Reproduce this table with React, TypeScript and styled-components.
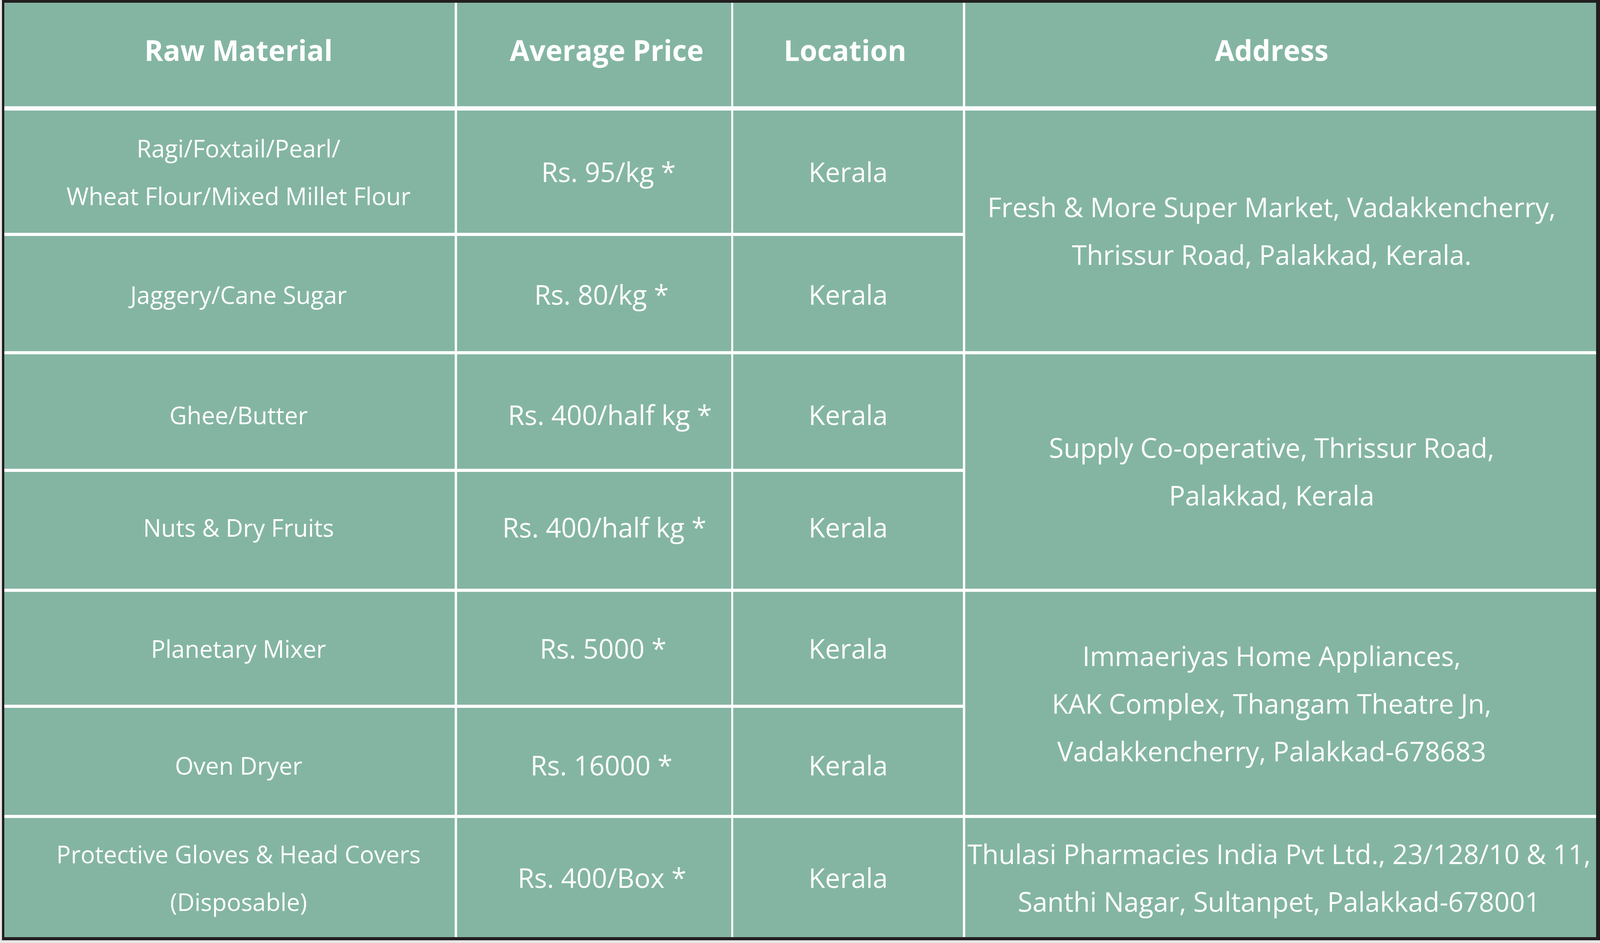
import React from "react";
import styled, { createGlobalStyle } from "styled-components";

/* Sizes are taken from the 6076×2414 reference and expressed relative to
   the viewport so the table fills the window whatever its real size. */
const W = (n: number) => `calc(${n} * 100vw / 6076)`;
const H = (n: number) => `calc(${n} * 100vh / 2414)`;
const F = (n: number) => `min(${W(n)}, ${H(n)})`;

const Global = createGlobalStyle`
  html, body {
    margin: 0;
    padding: 0;
    background: #e7e7e7;
    height: 100vh;
    overflow: hidden;
  }
  body {
    font-family: "Open Sans", "Noto Sans", "Liberation Sans", sans-serif;
  }
`;

const Frame = styled.div`
  box-sizing: border-box;
  margin-left: ${W(8)};
  width: ${W(6068)};
  height: ${H(2407)};
  border-style: solid;
  border-color: #231f20;
  border-width: ${H(7)} ${W(15)} ${H(8)} ${W(9)};
  background: #231f20;
`;

const Table = styled.div`
  height: 100%;
  display: grid;
  grid-template-columns: 1710fr 1042fr 872fr 2396fr;
  grid-template-rows: 268fr 313fr 295fr 293fr 299fr 289fr 274fr 305fr;
  column-gap: ${W(8)};
  row-gap: ${H(8)};
  background: #ffffff;
`;

type Col = 1 | 2 | 3 | 4;

type CellProps = {
  $col: Col;
  $row: number;
  $span?: number;
  $dx?: number;
  $dy?: number;
};

const fontSize: Record<Col, number> = { 1: 91, 2: 102, 3: 102, 4: 102 };

const Cell = styled.div<CellProps>`
  grid-column: ${(p) => p.$col};
  grid-row: ${(p) => `${p.$row} / span ${p.$span ?? 1}`};
  min-width: 0;
  background: #84b5a3;
  color: #ffffff;
  display: flex;
  flex-direction: column;
  align-items: center;
  justify-content: center;
  text-align: center;
  padding-left: ${(p) => W(Math.max(0, 2 * (p.$dx ?? 0)))};
  padding-right: ${(p) => W(Math.max(0, -2 * (p.$dx ?? 0)))};
  padding-top: ${(p) => H(Math.max(0, 2 * (p.$dy ?? 0)))};
  padding-bottom: ${(p) => H(Math.max(0, -2 * (p.$dy ?? 0)))};
  font-size: ${(p) => F(fontSize[p.$col])};
  line-height: ${H(122)};
  font-weight: 400;
  white-space: nowrap;
`;

const HeadCell = styled(Cell)`
  font-size: ${F(108)};
  font-weight: 700;
  line-height: ${H(150)};
  margin-bottom: ${H(3)};
`;

const Line = styled.span`
  display: block;
`;

type Row = {
  material: string[];
  price: string;
  priceDx: number;
  dy: number;
};

const rows: Row[] = [
  {
    material: ["Ragi/Foxtail/Pearl/", "Wheat Flour/Mixed Millet Flour"],
    price: "Rs. 95/kg *",
    priceDx: 55,
    dy: 0,
  },
  { material: ["Jaggery/Cane Sugar"], price: "Rs. 80/kg *", priceDx: 28, dy: 2 },
  { material: ["Ghee/Butter"], price: "Rs. 400/half kg *", priceDx: 60, dy: 8 },
  { material: ["Nuts & Dry Fruits"], price: "Rs. 400/half kg *", priceDx: 39, dy: -8 },
  { material: ["Planetary Mixer"], price: "Rs. 5000 *", priceDx: 34, dy: 0 },
  { material: ["Oven Dryer"], price: "Rs. 16000 *", priceDx: 28, dy: 10 },
  {
    material: ["Protective Gloves & Head Covers", "(Disposable)"],
    price: "Rs. 400/Box *",
    priceDx: 30,
    dy: 0,
  },
];

const addresses: { row: number; span: number; dx: number; lines: string[] }[] = [
  {
    row: 2,
    span: 2,
    dx: -34,
    lines: ["Fresh & More Super Market, Vadakkencherry,", "Thrissur Road, Palakkad, Kerala."],
  },
  {
    row: 4,
    span: 2,
    dx: -34,
    lines: ["Supply Co-operative, Thrissur Road,", "Palakkad, Kerala"],
  },
  {
    row: 6,
    span: 2,
    dx: -34,
    lines: [
      "Immaeriyas Home Appliances,",
      "KAK Complex, Thangam Theatre Jn,",
      "Vadakkencherry, Palakkad-678683",
    ],
  },
  {
    row: 8,
    span: 1,
    dx: -6,
    lines: [
      "Thulasi Pharmacies India Pvt Ltd., 23/128/10 & 11,",
      "Santhi Nagar, Sultanpet, Palakkad-678001",
    ],
  },
];

export default function App() {
  return (
    <>
      <Global />
      <Frame>
        <Table>
          <HeadCell $col={1} $row={1} $dx={34} $dy={-12}>Raw Material</HeadCell>
          <HeadCell $col={2} $row={1} $dx={48} $dy={-12}>Average Price</HeadCell>
          <HeadCell $col={3} $row={1} $dx={-12} $dy={-12}>Location</HeadCell>
          <HeadCell $col={4} $row={1} $dx={-34} $dy={-12}>Address</HeadCell>
          {rows.map((r, i) => (
            <React.Fragment key={i}>
              <Cell $col={1} $row={i + 2} $dx={34} $dy={r.dy}>
                {r.material.map((m) => (
                  <Line key={m}>{m}</Line>
                ))}
              </Cell>
              <Cell $col={2} $row={i + 2} $dx={r.priceDx} $dy={r.dy}>
                {r.price}
              </Cell>
              <Cell $col={3} $row={i + 2} $dy={r.dy}>
                Kerala
              </Cell>
            </React.Fragment>
          ))}
          {addresses.map((a) => (
            <Cell key={a.row} $col={4} $row={a.row} $span={a.span} $dx={a.dx}>
              {a.lines.map((l) => (
                <Line key={l}>{l}</Line>
              ))}
            </Cell>
          ))}
        </Table>
      </Frame>
    </>
  );
}
